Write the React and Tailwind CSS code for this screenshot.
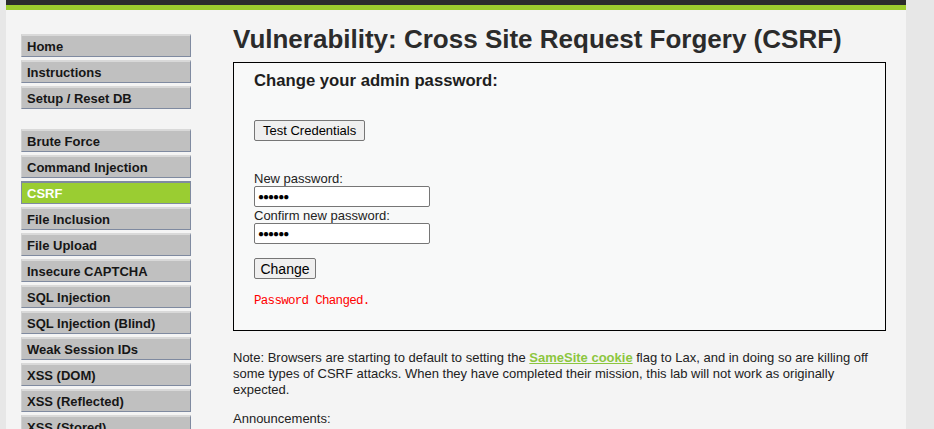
import React from "react";

const menu1 = ["Home", "Instructions", "Setup / Reset DB"];
const menu2 = [
  "Brute Force",
  "Command Injection",
  "CSRF",
  "File Inclusion",
  "File Upload",
  "Insecure CAPTCHA",
  "SQL Injection",
  "SQL Injection (Blind)",
  "Weak Session IDs",
  "XSS (DOM)",
  "XSS (Reflected)",
  "XSS (Stored)",
];

function MenuItem({ label }) {
  const active = label === "CSRF";
  return (
    <li
      className={
        "h-[23px] w-[170px] pl-[5px] flex items-center text-[13px] font-bold leading-none border border-[#7f8aa0] border-t-2 " +
        (active
          ? "bg-[#9acd32] text-white border-t-[#7f8aa0]"
          : "bg-[#c0c0c0] text-[#161616] border-t-[#d9d9d9] border-l-[#d0d0d0]")
      }
    >
      {label}
    </li>
  );
}

export default function App() {
  return (
    <div className="min-h-screen bg-[#e7e7e7] font-['Liberation_Sans',Arial,sans-serif] overflow-hidden">
      <div className="w-[900px] ml-[6px] h-[429px] bg-[#f4f4f4] overflow-hidden">
        <div className="h-[5px] bg-[#2c2c2c]" />
        <div className="h-[5px] bg-[#9dcc2e]" />
        <div className="flex">
          <div className="pl-[15px] pt-[24px] w-[227px] shrink-0">
            <ul className="flex flex-col gap-[3px]">
              {menu1.map((m) => (
                <MenuItem key={m} label={m} />
              ))}
            </ul>
            <ul className="flex flex-col gap-[3px] mt-[20px]">
              {menu2.map((m) => (
                <MenuItem key={m} label={m} />
              ))}
            </ul>
          </div>
          <div className="w-[653px] pt-[12px]">
            <h1 className="text-[26px] font-bold text-[#2b2b2b] leading-[34px]">
              Vulnerability: Cross Site Request Forgery (CSRF)
            </h1>
            <div className="mt-[6px] h-[269px] border border-black bg-[#f8f9f9] pl-[20px] pt-[8px]">
              <h3 className="text-[16.7px] font-bold text-[#1e1e1e] leading-[20px]">
                Change your admin password:
              </h3>
              <button className="mt-[29px] h-[21px] px-[8px] text-[13px] text-black bg-[#efefef] border border-[#767676] rounded-[2px] leading-none">
                Test Credentials
              </button>
              <div className="mt-[29px] text-[13px] text-[#222] leading-[15px]">New password:</div>
              <div className="h-[21px] w-[176px] border border-[#767676] rounded-[2px] bg-white flex items-center px-[3px] text-[10px] tracking-[-1px] text-black">
                ●●●●●●
              </div>
              <div className="mt-[1px] text-[13px] text-[#222] leading-[15px]">Confirm new password:</div>
              <div className="h-[21px] w-[176px] border border-[#767676] rounded-[2px] bg-white flex items-center px-[3px] text-[10px] tracking-[-1px] text-black">
                ●●●●●●
              </div>
              <button className="mt-[14px] h-[21px] w-[62px] text-[14px] text-black bg-[#efefef] border border-[#767676] rounded-[2px] leading-none">
                Change
              </button>
              <pre className="mt-[12px] font-['Liberation_Mono',monospace] text-[12.5px] tracking-[-0.7px] text-[#ff0000] leading-[16px]">
                Password Changed.
              </pre>
            </div>
            <p className="mt-[19px] text-[13px] text-[#222] leading-[16px] pr-[10px]">
              Note: Browsers are starting to default to setting the{" "}
              <a className="font-bold text-[#8cc63f] underline">SameSite cookie</a> flag to Lax, and in doing so are
              killing off some types of CSRF attacks. When they have completed their mission, this lab will not work as
              originally expected.
            </p>
            <p className="mt-[13px] text-[13px] text-[#222] leading-[16px]">Announcements:</p>
          </div>
        </div>
      </div>
    </div>
  );
}
